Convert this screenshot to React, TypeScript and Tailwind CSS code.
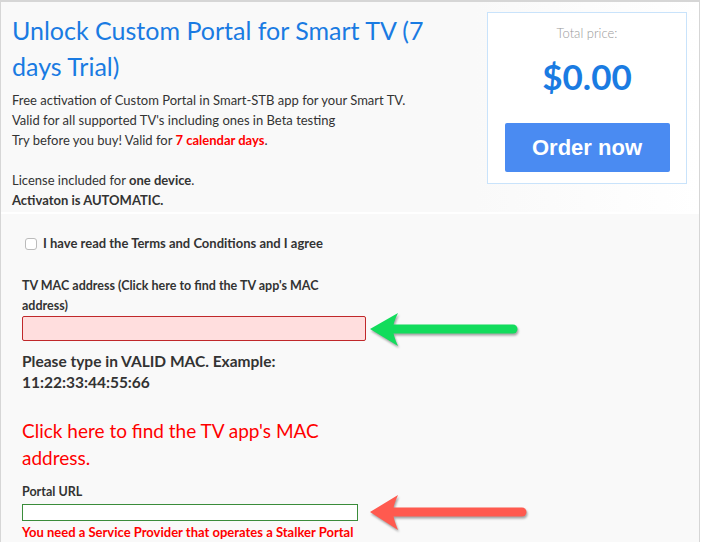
const GreenArrow = () => (
  <svg
    className="absolute left-[368px] top-[309px] drop-shadow-[1px_2px_1px_rgba(0,0,0,0.35)]"
    width="160"
    height="40"
    viewBox="0 0 160 40"
  >
    <line x1="24" y1="20" x2="145" y2="20" stroke="#12dc5c" strokeWidth="9" strokeLinecap="round" />
    <path d="M2 20 L30 4 Q25 14 25 20 Q25 26 30 37 Z" fill="#12dc5c" />
  </svg>
);

const RedArrow = () => (
  <svg
    className="absolute left-[368px] top-[492px] drop-shadow-[1px_2px_1px_rgba(0,0,0,0.35)]"
    width="170"
    height="40"
    viewBox="0 0 170 40"
  >
    <line x1="24" y1="20" x2="154" y2="20" stroke="#ff5a4f" strokeWidth="9" strokeLinecap="round" />
    <path d="M2 20 L30 3 Q25 14 25 20 Q25 26 30 38 Z" fill="#ff5a4f" />
  </svg>
);

export default function App() {
  return (
    <div className="w-[701px] h-[542px] overflow-hidden bg-white font-['Lato','Noto_Sans',sans-serif] text-[#333]">
      <div className="w-[700px] border-t-2 border-l border-r border-[#d6d6d6] bg-[#f9f9f9]">
        {/* top: product + price */}
        <div className="flex h-[212px] border-b-2 border-white">
          <div className="w-[474px] pl-[11px] pt-[10px]">
            <h1 className="text-[25px] leading-[36px] text-[#1a7be2]">
              Unlock Custom Portal for Smart TV (7 days Trial)
            </h1>
            <div className="mt-[6px] text-[13px] leading-[20px]">
              <p>Free activation of Custom Portal in Smart-STB app for your Smart TV.</p>
              <p>Valid for all supported TV's including ones in Beta testing</p>
              <p>
                Try before you buy! Valid for <span className="font-bold text-[#f00]">7 calendar days</span>.
              </p>
              <p>&nbsp;</p>
              <p>
                License included for <span className="font-bold">one device</span>.
              </p>
              <p className="font-bold">Activaton is AUTOMATIC.</p>
            </div>
          </div>
          <div className="flex-1 bg-gradient-to-r from-[#f9f9f9] to-white pl-[12px] pt-[10px]">
            <div className="flex h-[172px] w-[200px] flex-col items-center border border-[#c9e3fb] bg-white pt-[11px]">
              <p className="text-[13px] leading-[18px] font-light text-[#999]">Total price:</p>
              <p className="mt-[14px] text-[35px] leading-[40px] font-bold text-[#1a7be2]">$0.00</p>
              <button className="mt-[27px] h-[49px] w-[165px] rounded-[2px] bg-[#4a8bf2] font-['Liberation_Sans',Arial,sans-serif] text-[22px] font-bold text-white">
                Order now
              </button>
            </div>
          </div>
        </div>

        {/* bottom: form */}
        <div className="h-[330px] pl-[21px]">
          <label className="mt-[21px] flex h-[18px] items-center gap-[6px] text-[13px] font-bold">
            <span className="ml-[3px] h-[12px] w-[12px] rounded-[3px] border border-[#bbb] bg-white" />
            I have read the Terms and Conditions and I agree
          </label>

          <p className="mt-[23px] w-[310px] text-[12.5px] leading-[20px] font-bold">
            TV MAC address (Click here to find the TV app's MAC address)
          </p>
          <div className="h-[25px] w-[344px] rounded-[2px] border border-[#c0282a] bg-[#ffdede]" />

          <p className="mt-[10px] w-[280px] text-[15.5px] leading-[21px] font-bold">
            Please type in VALID MAC. Example: 11:22:33:44:55:66
          </p>

          <p className="mt-[24px] w-[310px] text-[19px] leading-[27px] text-[#f00]">
            Click here to find the TV app's MAC address.
          </p>

          <p className="mt-[11px] text-[12.5px] leading-[20px] font-bold">Portal URL</p>
          <div className="mt-[2px] h-[17px] w-[336px] border border-[#3a8c3a] bg-white" />
          <p className="mt-[2px] text-[13px] leading-[18px] font-bold text-[#f00]">
            You need a Service Provider that operates a Stalker Portal
          </p>
        </div>
      </div>
      <GreenArrow />
      <RedArrow />
    </div>
  );
}
